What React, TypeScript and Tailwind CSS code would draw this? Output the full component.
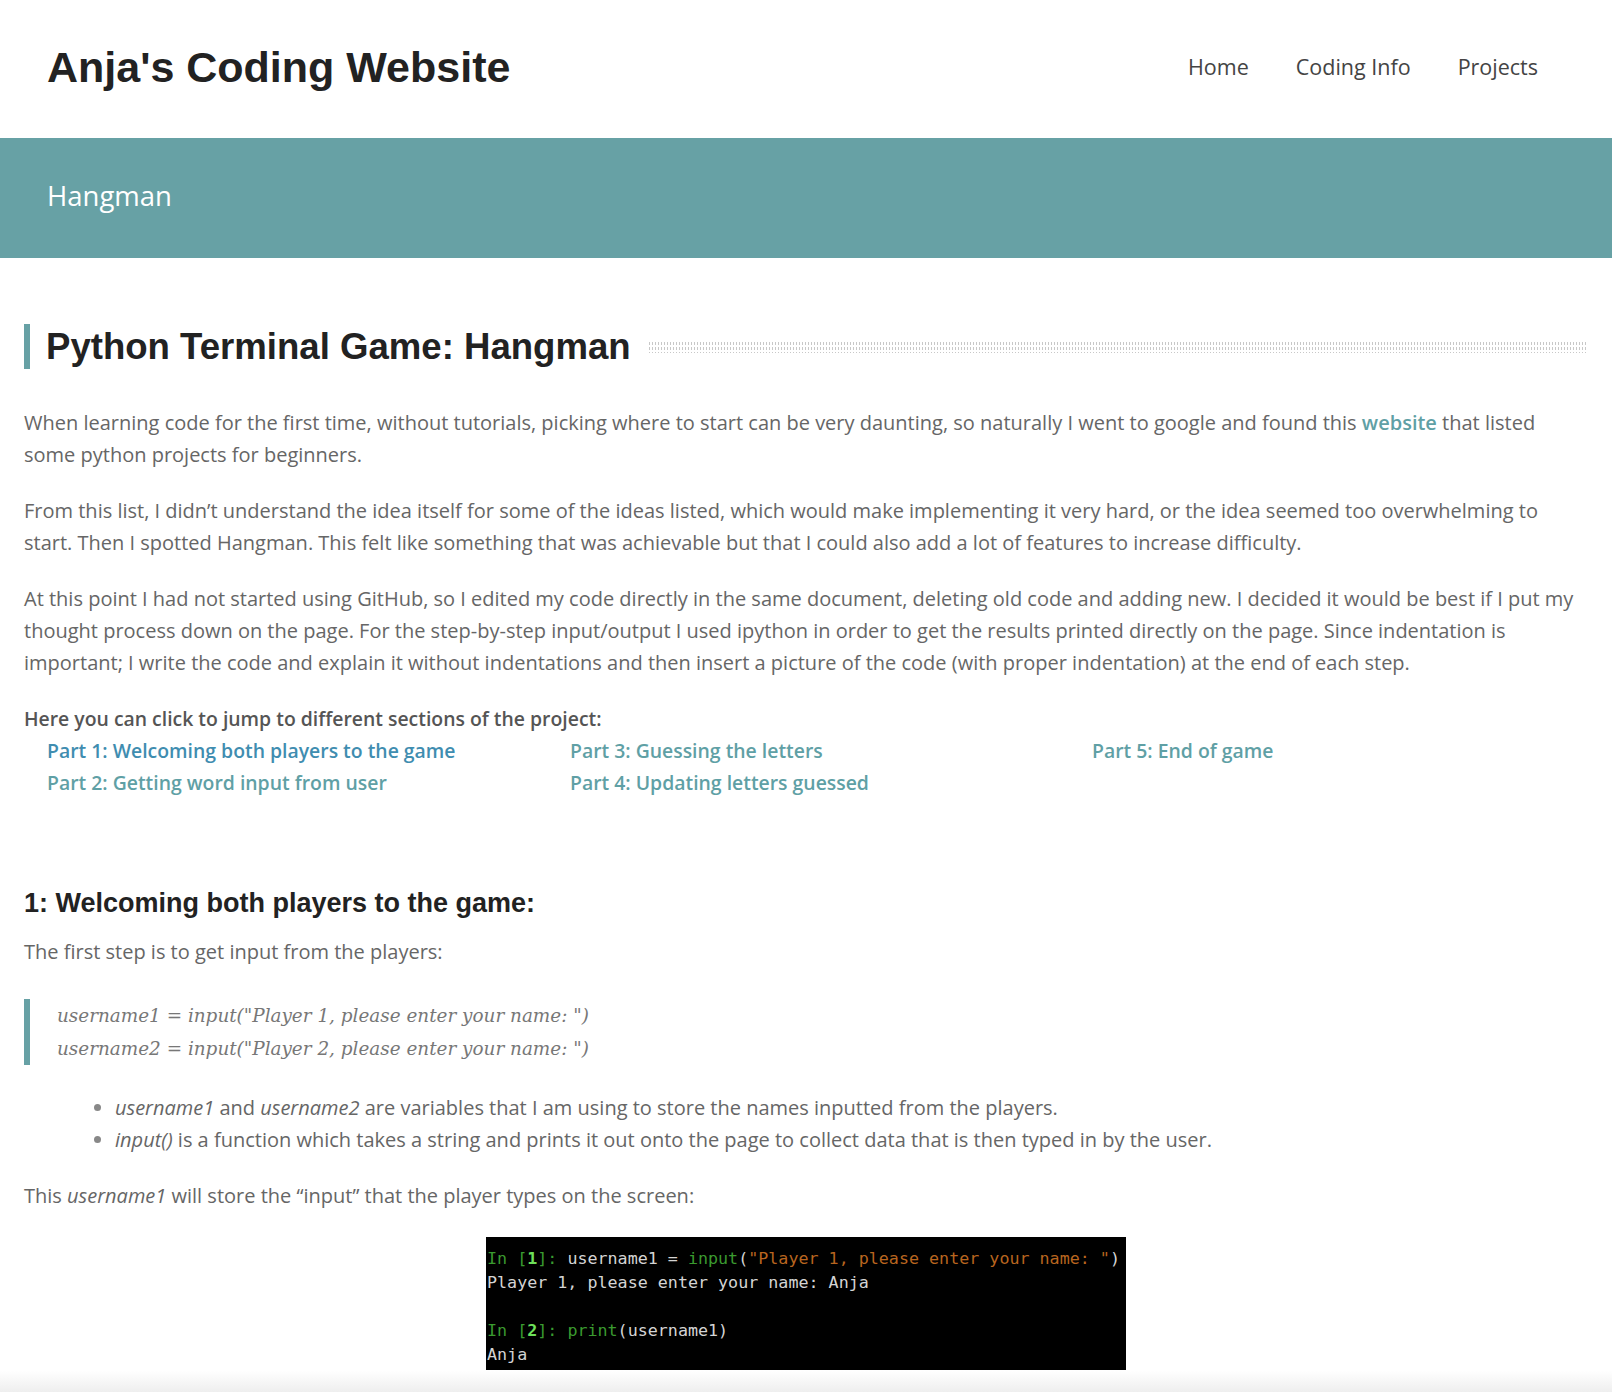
const sans = "font-['Open_Sans',sans-serif]";
const head = "font-['Liberation_Sans',Arial,sans-serif]";

const parts = [
  { label: 'Part 1: Welcoming both players to the game', active: true },
  { label: 'Part 3: Guessing the letters' },
  { label: 'Part 5: End of game' },
  { label: 'Part 2: Getting word input from user' },
  { label: 'Part 4: Updating letters guessed' },
];

function Header() {
  return (
    <header className="flex h-[138px] items-center justify-between pb-[4px] pl-[47px] pr-[74px]">
      <h1 className={`${head} text-[43px] font-bold text-[#222]`}>Anja's Coding Website</h1>
      <nav className={`${sans} flex gap-[47px] text-[21.5px] text-[#444]`}>
        <a href="#">Home</a>
        <a href="#">Coding Info</a>
        <a href="#">Projects</a>
      </nav>
    </header>
  );
}

function Terminal() {
  return (
    <div className="mx-auto mt-[25px] w-[640px] bg-black px-[1px] pt-[9px] pb-[4px] font-['DejaVu_Sans_Mono',monospace] text-[16.7px] leading-[24px] text-[#d4d4d4]">
      <div className="whitespace-pre">
        <span className="text-[#3a9a2f]">In [</span>
        <span className="font-bold text-[#6ee05a]">1</span>
        <span className="text-[#3a9a2f]">]: </span>
        username1 = <span className="text-[#3a9a2f]">input</span>(
        <span className="text-[#b8651f]">"Player 1, please enter your name: "</span>)
      </div>
      <div className="whitespace-pre">Player 1, please enter your name: Anja</div>
      <div className="h-[24px]" />
      <div className="whitespace-pre">
        <span className="text-[#3a9a2f]">In [</span>
        <span className="font-bold text-[#6ee05a]">2</span>
        <span className="text-[#3a9a2f]">]: </span>
        <span className="text-[#3a9a2f]">print</span>(username1)
      </div>
      <div className="whitespace-pre">Anja</div>
    </div>
  );
}

export default function App() {
  return (
    <div className="min-h-screen bg-white">
      <Header />

      <section className="flex h-[120px] items-center bg-[#67a1a5] pb-[4px] pl-[47px]">
        <h2 className={`${sans} text-[27.5px] text-white`}>Hangman</h2>
      </section>

      <main className={`${sans} px-[24px] pt-[66px] pb-[40px] text-[20px] leading-[32px] text-[#666]`}>
        <div className="flex items-center">
          <h2
            className={`${head} border-l-[6px] border-[#67a1a5] pl-[16px] text-[36.6px] leading-[45px] font-bold text-[#222]`}
          >
            Python Terminal Game: Hangman
          </h2>
          <div className="ml-[17px] h-[12px] flex-1 bg-[radial-gradient(#c8c8c8_0.8px,transparent_1px)] bg-[length:3px_5px]" />
        </div>

        <p className="mt-[38px]">
          When learning code for the first time, without tutorials, picking where to start can be very daunting, so
          naturally I went to google and found this{' '}
          <a href="#" className="font-semibold text-[#5fa0a5]">
            website
          </a>{' '}
          that listed some python projects for beginners.
        </p>
        <p className="mt-[24px]">
          From this list, I didn’t understand the idea itself for some of the ideas listed, which would make
          implementing it very hard, or the idea seemed too overwhelming to start. Then I spotted Hangman. This felt
          like something that was achievable but that I could also add a lot of features to increase difficulty.
        </p>
        <p className="mt-[24px]">
          At this point I had not started using GitHub, so I edited my code directly in the same document, deleting old
          code and adding new. I decided it would be best if I put my thought process down on the page. For the
          step-by-step input/output I used ipython in order to get the results printed directly on the page. Since
          indentation is important; I write the code and explain it without indentations and then insert a picture of
          the code (with proper indentation) at the end of each step.
        </p>

        <p className="mt-[24px] text-[19.4px] font-semibold text-[#555]">
          Here you can click to jump to different sections of the project:
        </p>
        <ul className="grid grid-cols-[523px_522px_1fr] pl-[23px] text-[19.4px] font-semibold">
          {parts.map((p) => (
            <li key={p.label}>
              <a href="#" className={p.active ? 'text-[#3f8db0]' : 'text-[#5fa0a5]'}>
                {p.label}
              </a>
            </li>
          ))}
        </ul>

        <h3 className={`${head} mt-[86px] text-[27px] leading-[36px] font-bold text-[#222]`}>
          1: Welcoming both players to the game:
        </h3>
        <p className="mt-[15px]">The first step is to get input from the players:</p>

        <blockquote className="mt-[31px] border-l-[6px] border-[#67a1a5] pl-[27px] font-['DejaVu_Serif',serif] text-[18.4px] leading-[33px] text-[#777] italic">
          <div>username1 = input("Player 1, please enter your name: ")</div>
          <div>username2 = input("Player 2, please enter your name: ")</div>
        </blockquote>

        <ul className="mt-[27px] list-disc pl-[91px] marker:text-[#888]">
          <li>
            <em>username1</em> and <em>username2</em> are variables that I am using to store the names inputted from
            the players.
          </li>
          <li>
            <em>input()</em> is a function which takes a string and prints it out onto the page to collect data that is
            then typed in by the user.
          </li>
        </ul>

        <p className="mt-[24px]">
          This <em>username1</em> will store the “input” that the player types on the screen:
        </p>

        <Terminal />
      </main>

      <div className="pointer-events-none fixed inset-x-0 bottom-0 h-[22px] bg-gradient-to-b from-transparent to-[#e4e4e4]/60" />
    </div>
  );
}
